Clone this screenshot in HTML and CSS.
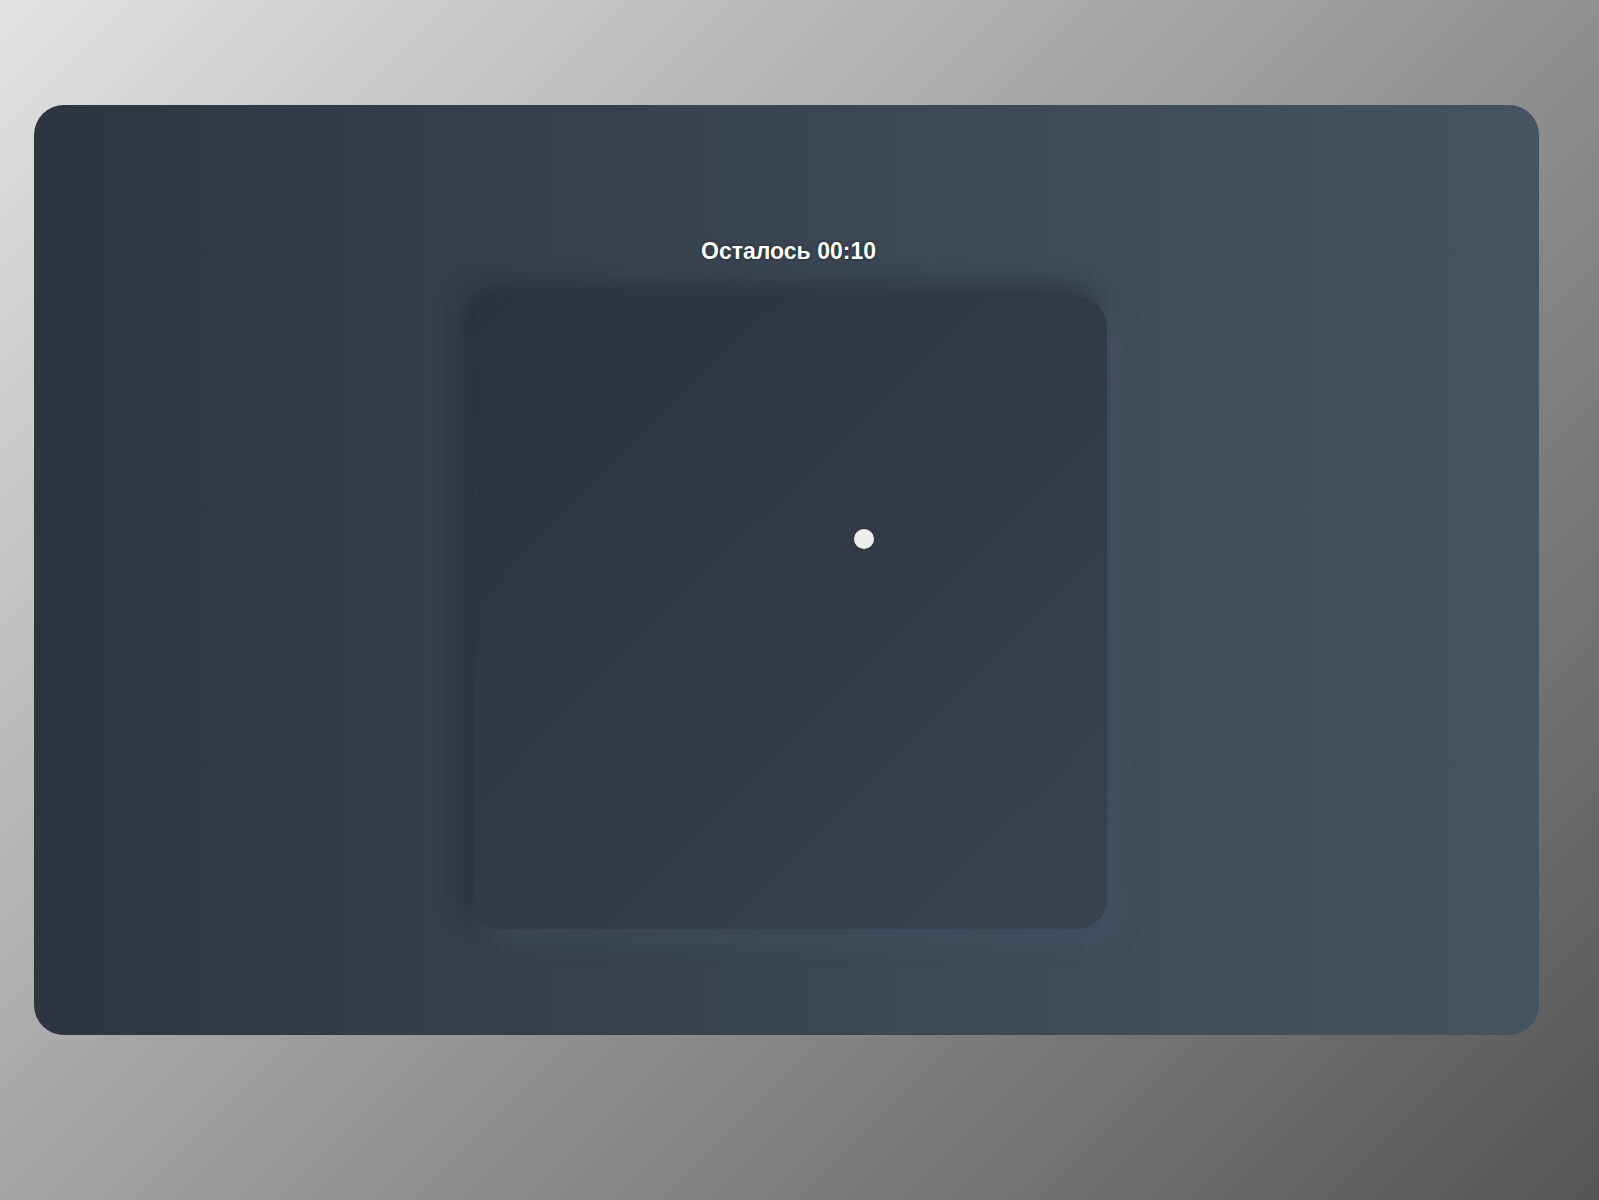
FILE: index.html
```html
<!DOCTYPE html>
<html lang="ru">
<head>
  <meta charset="UTF-8">
  <title>Таймер</title>
  <link rel="stylesheet" href="styles.css">
</head>
<body>

  <div class="card">
    <div class="timer">Осталось <span id="time">00:10</span></div>
    <div class="field">
      <div class="dot"></div>
    </div>
  </div>

</body>
</html>
```

FILE: styles.css
```css
html, body {
  height: 100%;
}

body {
  margin: 0;
  padding: 105px 60px 0 34px;
  box-sizing: border-box;
  background: linear-gradient(135deg, #e2e2e2 0%, #9a9a9a 50%, #555 100%);
  font-family: 'Liberation Sans', Arial, sans-serif;
}

.card {
  height: 930px;
  border-radius: 30px;
  background: linear-gradient(90deg, #2d3540 0%, #38424f 40%, #465462 100%);
  display: flex;
  flex-direction: column;
  align-items: center;
  padding-top: 133px;
  box-sizing: border-box;
}

.timer {
  color: #fff;
  font-size: 23px;
  font-weight: bold;
  text-shadow: 0 0 3px rgba(0, 0, 0, 0.6);
  margin-left: 4px;
}

.field {
  position: relative;
  width: 634px;
  height: 632px;
  margin-top: 32px;
  margin-left: 6px;
  border-radius: 30px;
  background: linear-gradient(135deg, #2b333e 0%, #313a45 50%, #39434f 100%);
  box-shadow: -10px -10px 24px rgba(30, 36, 44, 0.55), 10px 10px 24px rgba(80, 94, 112, 0.45);
}

.dot {
  position: absolute;
  left: 381px;
  top: 232px;
  width: 20px;
  height: 20px;
  border-radius: 50%;
  background: #eee;
}
```
